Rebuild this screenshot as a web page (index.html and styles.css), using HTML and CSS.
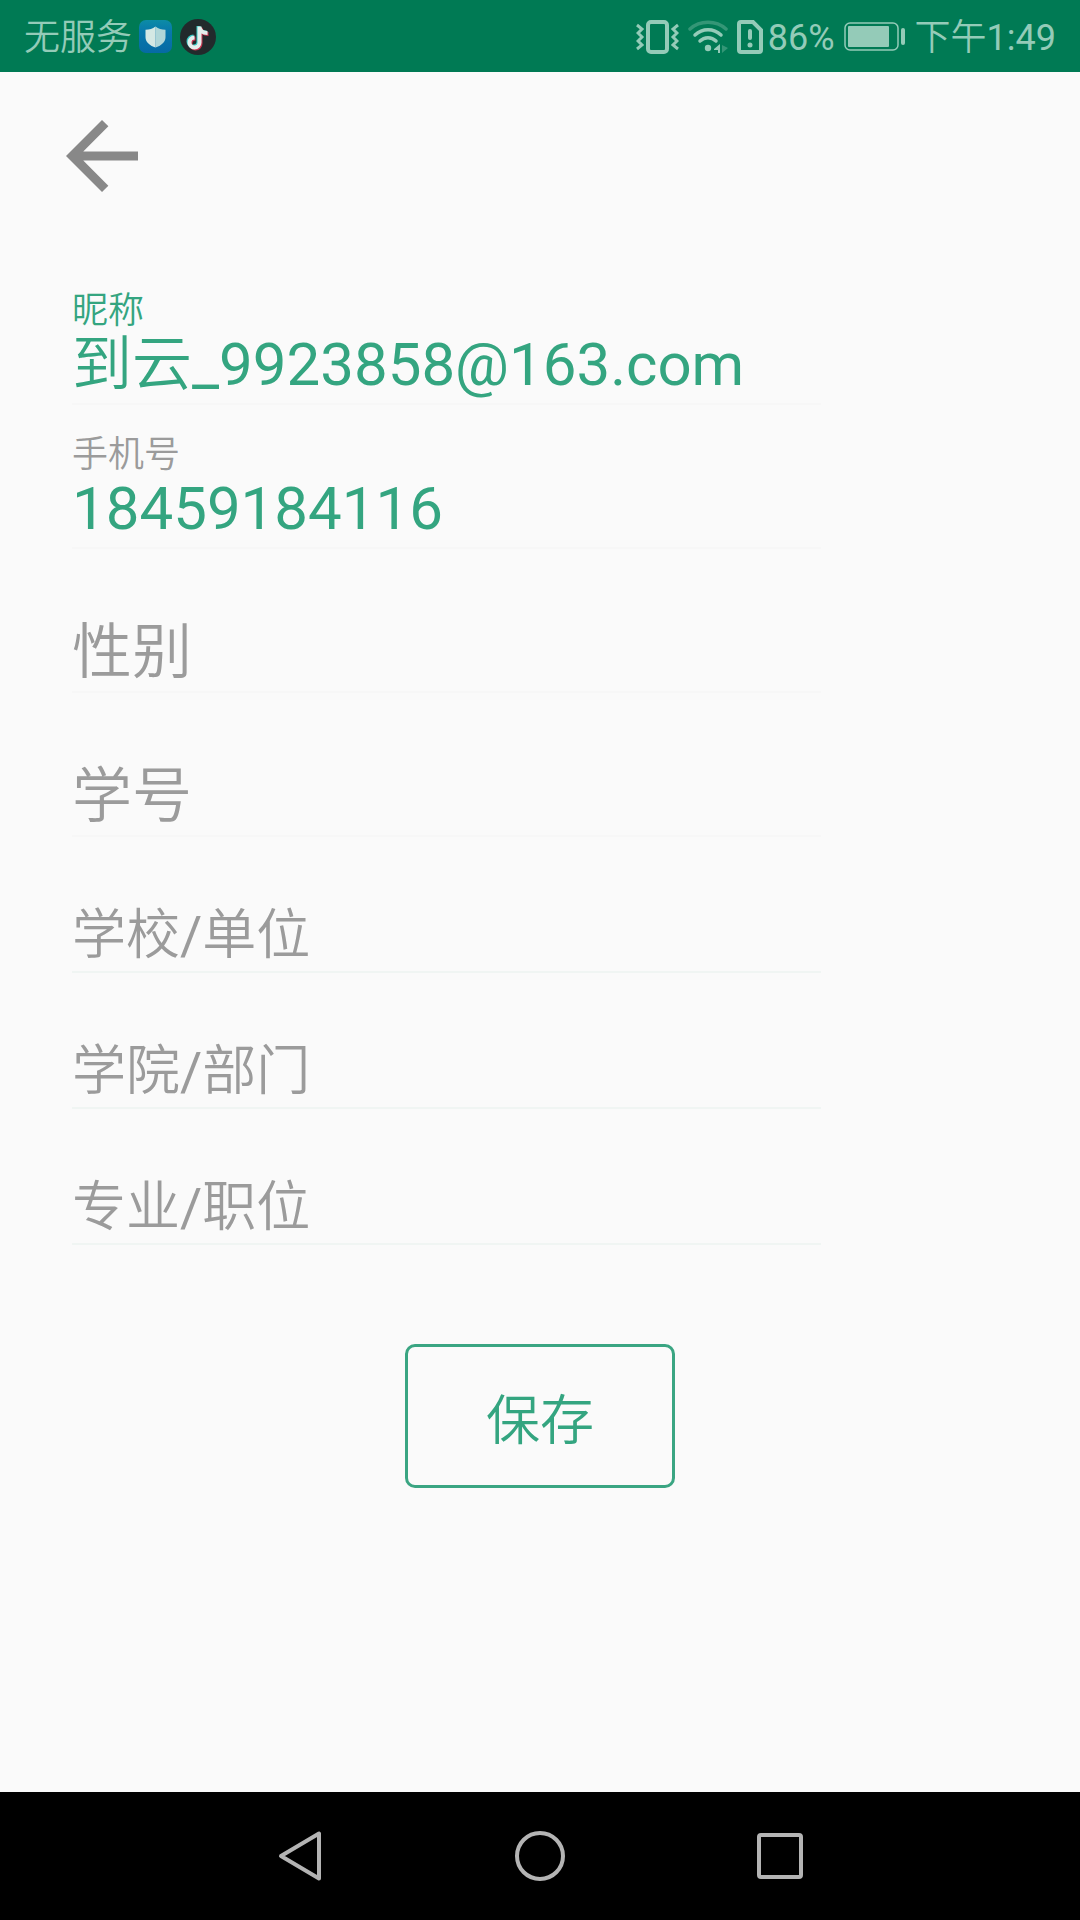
FILE: index.html
```html
<!DOCTYPE html>
<html lang="zh-CN">
<head>
<meta charset="utf-8">
<meta name="viewport" content="width=device-width, initial-scale=1">
<title>昵称</title>
<link rel="stylesheet" href="styles.css">
</head>
<body>
<div class="screen">
  <div class="status-bar">
    <div class="status-left">
      <span>无服务</span>
      <svg width="34" height="34" viewBox="0 0 34 34" aria-hidden="true">
        <defs>
          <linearGradient id="shieldTile" x1="0" y1="0" x2="0" y2="1"><stop offset="0" stop-color="#0c8ca6"/><stop offset=".35" stop-color="#0878ac"/><stop offset="1" stop-color="#066aa4"/></linearGradient>
        </defs>
        <rect width="33" height="33" rx="7" fill="url(#shieldTile)"/>
        <path d="M16.500 6.500c3 2.400 6 3 10 3.200v7.500c0 5-4.500 8.500-10 10.300z" fill="#b0d6d8"/>
        <path d="M16.500 6.500c-3 2.400-6 3-10 3.200v7.500c0 5 4.500 8.500 10 10.300z" fill="#d4e8e4"/>
      </svg>
      <svg width="36" height="36" viewBox="0 0 36 36" aria-hidden="true">
        <circle cx="18" cy="18" r="18" fill="#222a2c"/>
        <g fill="none" stroke-width="4">
          <path d="M18.500 7v15.500a5 5 0 1 1-5-5M18.500 7.500c.6 3.500 3.500 6 8 6" stroke="#38c8c4"/>
          <path d="M20.500 9v15.500a5 5 0 1 1-5-5M20.500 9c.6 3.500 3.500 6 8 6" stroke="#c83450"/>
          <path d="M19.500 7.500v16a5 5 0 1 1-5-5M19.500 8c.6 3.500 3.500 6 8 6" stroke="#e4eeec"/>
        </g>
      </svg>
    </div>
    <div class="status-right">
      <svg width="43" height="34" viewBox="0 0 43 34" fill="none" stroke="currentColor" aria-hidden="true">
        <rect x="12" y="2" width="19" height="30" rx="3" stroke-width="4"/>
        <path d="M1 5l5 4-4 4 4 4-4 4 4 4-5 4M42 5l-5 4 4 4-4 4 4 4-4 4 5 4" stroke-width="3"/>
      </svg>
      <svg width="40" height="34" viewBox="0 0 40 34" fill="none" stroke="currentColor" stroke-width="3.500" stroke-linecap="round" aria-hidden="true">
        <path d="M2 9c10-9 26-9 36 0" opacity=".35"/>
        <path d="M7 15c7.500-7 18.500-7 26 0" />
        <path d="M12 21c4.500-4.500 11.500-4.500 16 0"/>
        <circle cx="20" cy="28" r="3.200" fill="currentColor" stroke="none"/>
        <path d="M32 24v9h-2v-3h-4v-1z" fill="currentColor" stroke="none"/>
        <path d="M34 25v8l6-5z" fill="currentColor" stroke="none" opacity=".35"/>
      </svg>
      <svg width="26" height="34" viewBox="0 0 26 34" fill="none" stroke="currentColor" stroke-width="4" aria-hidden="true">
        <path d="M4 2h12l8 8v20a2 2 0 0 1-2 2H4a2 2 0 0 1-2-2V4a2 2 0 0 1 2-2z"/>
        <path d="M13 11v7" stroke-linecap="round"/>
        <circle cx="13" cy="25" r="2.500" fill="currentColor" stroke="none"/>
      </svg>
      <span class="percent">86%</span>
      <svg width="62" height="30" viewBox="0 0 62 30" aria-hidden="true">
        <rect x="1" y="1" width="53" height="27" rx="5" fill="none" stroke="currentColor" stroke-width="1.500"/>
        <rect x="4" y="4" width="41" height="21" rx="1" fill="currentColor"/>
        <rect x="57" y="6" width="4" height="17" rx="2" fill="currentColor"/>
      </svg>
      <span class="clock">下午1:49</span>
    </div>
  </div>

  <header class="top-bar">
    <button class="back-button" type="button" aria-label="返回">
      <svg viewBox="0 0 24 24" aria-hidden="true"><path d="M20 11H7.830l5.590-5.590L12 4l-8 8 8 8 1.410-1.410L7.830 13H20v-2z" fill="#888"/></svg>
    </button>
  </header>

  <main class="content">
    <form class="profile-form">
      <div class="fields">
        <div class="field">
          <label class="field-label field-label-active" for="nickname">昵称</label>
          <input class="field-input" id="nickname" type="text" value="到云_9923858@163.com">
        </div>
        <div class="field">
          <label class="field-label" for="phone">手机号</label>
          <input class="field-input" id="phone" type="tel" value="18459184116">
        </div>
        <div class="field">
          <input class="field-input" type="text" placeholder="性别" aria-label="性别">
        </div>
        <div class="field">
          <input class="field-input" type="text" placeholder="学号" aria-label="学号">
        </div>
        <div class="field field-compact">
          <input class="field-input" type="text" placeholder="学校/单位" aria-label="学校/单位">
        </div>
        <div class="field field-compact">
          <input class="field-input" type="text" placeholder="学院/部门" aria-label="学院/部门">
        </div>
        <div class="field field-compact">
          <input class="field-input" type="text" placeholder="专业/职位" aria-label="专业/职位">
        </div>
      </div>
      <button class="save-button" type="button">保存</button>
    </form>
  </main>

  <nav class="nav-bar">
    <button class="nav-button" type="button" aria-label="返回">
      <svg width="52" height="52" viewBox="0 0 52 52"><path d="M45 3.500v45L7 26z"/></svg>
    </button>
    <button class="nav-button" type="button" aria-label="主屏幕">
      <svg width="52" height="52" viewBox="0 0 52 52"><circle cx="26" cy="26" r="23"/></svg>
    </button>
    <button class="nav-button" type="button" aria-label="最近任务">
      <svg width="52" height="52" viewBox="0 0 52 52"><rect x="5" y="5" width="42" height="42" rx="2"/></svg>
    </button>
  </nav>
</div>
</body>
</html>
```
FILE: styles.css
```css
* {
  box-sizing: border-box;
}

body {
  margin: 0;
  background: #fafafa;
  font-family: Roboto, "Noto Sans CJK SC DemiLight", "Noto Sans CJK SC", sans-serif;
}

button,
input {
  margin: 0;
  padding: 0;
  border: 0;
  background: none;
  font: inherit;
  color: inherit;
}

svg {
  display: block;
  flex: none;
}

.screen {
  display: flex;
  flex-direction: column;
  min-height: 100vh;
}

.status-bar {
  display: flex;
  justify-content: space-between;
  align-items: center;
  height: 72px;
  padding: 4px 24px 0;
  background: #007a54;
  color: #94cbb8;
  font-size: 36px;
  line-height: 40px;
}

.status-left,
.status-right {
  display: flex;
  align-items: center;
}

.status-left {
  gap: 7px;
}

.status-right {
  gap: 9px;
}

.status-left svg,
.status-right svg {
  margin-bottom: 2px;
}

.percent {
  margin-left: -4px;
}

.top-bar {
  padding: 30px 48px 0;
}

.back-button {
  display: block;
  width: 108px;
  height: 108px;
}

.content {
  flex: 1;
  padding: 51px 72px 96px;
}

.profile-form {
  display: flex;
  flex-direction: column;
  align-items: center;
  gap: 99px;
}

.fields {
  align-self: flex-start;
  width: 80%;
}

.field {
  display: flex;
  flex-direction: column;
  justify-content: flex-end;
  height: 144px;
  border-bottom: 2px solid #f7f7f7;
  color: #34a580;
  font-size: 60px;
}

.field-compact {
  height: 136px;
  border-bottom-color: #f0f5f3;
  font-size: 54px;
}

.field-label {
  color: #9b9b9b;
  font-size: 36px;
  line-height: 32px;
}

.field-label-active {
  color: #34a580;
}

.field-input {
  width: 100%;
  height: 76px;
  line-height: 76px;
  outline: none;
}

.field-compact .field-input {
  height: 70px;
  line-height: 70px;
}

.field-input::placeholder {
  color: #9b9b9b;
  opacity: 1;
}

.save-button {
  width: 270px;
  height: 144px;
  border: 3px solid #3aa582;
  border-radius: 10px;
  color: #34a580;
  font-size: 54px;
}

.nav-bar {
  display: flex;
  justify-content: center;
  height: 128px;
  background: #000;
}

.nav-button {
  display: flex;
  justify-content: center;
  align-items: center;
  width: 240px;
}

.nav-button svg {
  fill: none;
  stroke: #b4b4b4;
  stroke-width: 4;
  stroke-linejoin: round;
}
```
